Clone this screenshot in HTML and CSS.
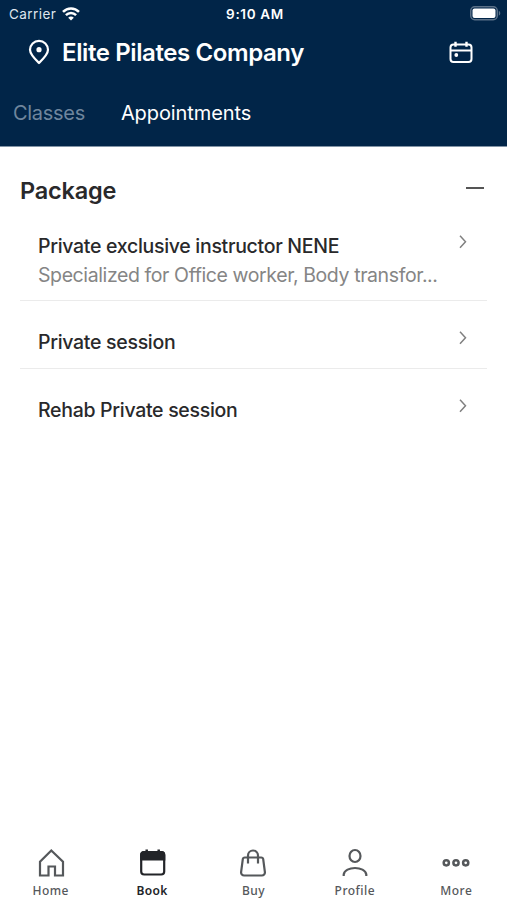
FILE: index.html
```html
<!DOCTYPE html>
<html lang="en">
<head>
    <meta charset="UTF-8">
    <meta name="viewport" content="width=device-width, initial-scale=1.0">
    <title>Elite Pilates Company</title>
    <link rel="stylesheet" href="styles.css">
</head>
<body>
    <div class="app">
        <header class="header">
            <div class="status-bar">
                <div class="carrier">
                    <span class="carrier-name">Carrier</span>
                    <svg width="18" height="14" viewBox="0 0 18 14" fill="none" stroke="#fff" stroke-width="2.5">
                        <path d="M1 4.9C5.5.2 12.500.2 17 4.900"/>
                        <path d="M3.900 8.200c2.900-2.900 7.300-2.900 10.200 0"/>
                        <path d="M9 13.500 6.200 10.700c1.600-1.500 4-1.500 5.600 0z" fill="#fff" stroke="none"/>
                    </svg>
                </div>
                <span class="clock">9:10 AM</span>
                <svg class="battery" width="31" height="15" viewBox="0 0 31 15">
                    <rect x=".75" y=".75" width="26.500" height="13" rx="4" fill="none" stroke="#5b7188" stroke-width="1.500"/>
                    <rect x="2.500" y="2.500" width="23" height="9.500" rx="2" fill="#fff"/>
                    <path d="M28.800 4.800c2 1 2 4 0 5z" fill="#5b7188"/>
                </svg>
            </div>

            <div class="title-bar">
                <svg width="22" height="26" viewBox="0 0 22 26" fill="none" stroke="#fff" stroke-width="2.200">
                    <path d="M11 24C7 20.200 2 15.500 2 10.800a9 9 0 0 1 18 0C20 15.500 15 20.200 11 24z" stroke-linejoin="round"/>
                    <circle cx="11" cy="10.700" r="2.600" fill="#fff" stroke="none"/>
                </svg>
                <h1>Elite Pilates Company</h1>
                <svg class="calendar" width="24" height="22" viewBox="0 0 24 22" fill="none" stroke="#fff" stroke-width="2">
                    <rect x="1.500" y="3.500" width="21" height="17.500" rx="3"/>
                    <path d="M2 9.500h20"/>
                    <path d="M6.500.8v5M17.500.8v5" stroke-width="2.400"/>
                    <circle cx="7.300" cy="14" r="1.900" fill="#fff" stroke="none"/>
                </svg>
            </div>

            <nav class="tabs">
                <span class="tab">Classes</span>
                <span class="tab active">Appointments</span>
            </nav>
        </header>

        <main class="content">
            <div class="section-header">
                <h2>Package</h2>
                <span class="collapse"></span>
            </div>

            <ul class="package-list">
                <li class="package first">
                    <div class="package-text">
                        <h3>Private exclusive instructor NENE</h3>
                        <p>Specialized for Office worker, Body transfor...</p>
                    </div>
                    <svg class="chevron" width="8" height="14" viewBox="0 0 8 14" fill="none" stroke="#808080" stroke-width="1.500"><path d="M1 .8l5.500 6L1 12.800"/></svg>
                </li>
                <li class="package">
                    <div class="package-text">
                        <h3>Private session</h3>
                    </div>
                    <svg class="chevron" width="8" height="14" viewBox="0 0 8 14" fill="none" stroke="#808080" stroke-width="1.500"><path d="M1 .8l5.500 6L1 12.800"/></svg>
                </li>
                <li class="package">
                    <div class="package-text">
                        <h3>Rehab Private session</h3>
                    </div>
                    <svg class="chevron" width="8" height="14" viewBox="0 0 8 14" fill="none" stroke="#808080" stroke-width="1.500"><path d="M1 .8l5.500 6L1 12.800"/></svg>
                </li>
            </ul>
        </main>

        <nav class="bottom-nav">
            <div class="nav-item">
                <svg width="28" height="30" viewBox="0 0 28 30" fill="none" stroke="#55585b" stroke-width="2.200">
                    <path d="M3 27.500V13.700L14.300 2.500 26 13.700V27.500H18V18.500H11.500V27.500z"/>
                </svg>
                <span>Home</span>
            </div>
            <div class="nav-item active">
                <svg width="28" height="30" viewBox="0 0 28 30" fill="none" stroke="#222428" stroke-width="2.200">
                    <rect x="3.200" y="4" width="23" height="22.500" rx="3"/>
                    <path d="M3.200 11.500V7a3 3 0 0 1 3-3h17a3 3 0 0 1 3 3v4.500z" fill="#222428"/>
                    <path d="M8.700 1.500v4M20.700 1.500v4" stroke-width="2.500"/>
                </svg>
                <span>Book</span>
            </div>
            <div class="nav-item">
                <svg width="28" height="30" viewBox="0 0 28 30" fill="none" stroke="#55585b" stroke-width="2.200">
                    <path d="M5.800 9.500h16.400a2 2 0 0 1 2 1.700l1.700 13a3 3 0 0 1-3 3.300H5.100a3 3 0 0 1-3-3.300l1.700-13a2 2 0 0 1 2-1.700z"/>
                    <path d="M9 15.500V7.500a5 5 0 0 1 10 0v8"/>
                </svg>
                <span>Buy</span>
            </div>
            <div class="nav-item">
                <svg width="28" height="30" viewBox="0 0 28 30" fill="none" stroke="#55585b" stroke-width="2.200">
                    <ellipse cx="14" cy="8" rx="5.500" ry="6"/>
                    <path d="M2.700 28v-1.500c1-8.700 21.600-8.700 22.600 0V28"/>
                </svg>
                <span>Profile</span>
            </div>
            <div class="nav-item">
                <svg width="28" height="30" viewBox="0 0 28 30" fill="none" stroke="#55585b" stroke-width="2.500">
                    <circle cx="4.300" cy="14.800" r="2.600"/>
                    <circle cx="14" cy="14.800" r="2.600"/>
                    <circle cx="23.700" cy="14.800" r="2.600"/>
                </svg>
                <span>More</span>
            </div>
        </nav>
    </div>
</body>
</html>
```
FILE: styles.css
```css
:root {
  --header-color: #012548;
  --text-color: #29292b;
  --muted-color: #858585;
  --border-color: #ebebeb;
  --nav-color: #55585b;
}

* {
  box-sizing: border-box;
  margin: 0;
  padding: 0;
}

body {
  font-family: 'Inter', 'Liberation Sans', sans-serif;
  background-color: white;
  color: var(--text-color);
}

svg {
  display: block;
  flex-shrink: 0;
}

.app {
  display: flex;
  flex-direction: column;
  height: 900px;
}

.header {
  height: 147px;
  background-color: var(--header-color);
  border-bottom: 1px solid #8294a6;
  color: white;
}

.status-bar {
  display: grid;
  grid-template-columns: 1fr auto 1fr;
  align-items: center;
  height: 27px;
  padding: 0 6px 0 9px;
}

.carrier {
  display: flex;
  align-items: center;
  gap: 6px;
}

.carrier-name {
  font-size: 13.5px;
  letter-spacing: 0.45px;
  color: #dfe6ed;
}

.clock {
  font-size: 13.5px;
  font-weight: 600;
  letter-spacing: 0.65px;
}

.battery {
  justify-self: end;
}

.title-bar {
  display: flex;
  align-items: center;
  height: 50px;
  padding: 0 34px 0 28px;
}

h1 {
  margin-left: 12px;
  font-size: 24px;
  font-weight: 600;
  letter-spacing: -0.4px;
  white-space: nowrap;
}

.calendar {
  margin-left: auto;
}

.tabs {
  display: flex;
  gap: 36px;
  padding: 22px 13px 0;
}

.tab {
  font-size: 20px;
  line-height: 28px;
  letter-spacing: -0.3px;
  color: #6f869d;
}

.tab.active {
  letter-spacing: -0.1px;
  color: white;
}

.content {
  flex: 1;
  padding: 23px 20px 0;
}

.section-header {
  display: flex;
  justify-content: space-between;
  align-items: center;
  height: 40px;
  padding-right: 3px;
}

h2 {
  padding-top: 1px;
  font-size: 23.5px;
  font-weight: 600;
  letter-spacing: -0.2px;
}

.collapse {
  width: 18px;
  height: 2px;
  margin-bottom: 4px;
  background-color: #555;
}

.package-list {
  list-style: none;
}

.package {
  display: flex;
  justify-content: space-between;
  padding: 27px 20px 12px 18px;
  border-bottom: 1px solid var(--border-color);
}

.package.first {
  padding-top: 22px;
  padding-bottom: 10px;
}

.package:last-child {
  border-bottom: none;
}

h3 {
  font-size: 19.5px;
  font-weight: 500;
  line-height: 28px;
  letter-spacing: -0.3px;
  white-space: nowrap;
}

.package p {
  font-size: 19.5px;
  line-height: 30px;
  letter-spacing: -0.4px;
  color: var(--muted-color);
  white-space: nowrap;
}

.chevron {
  margin-top: 3px;
}

.bottom-nav {
  display: grid;
  grid-template-columns: repeat(5, 1fr);
  height: 52px;
}

.nav-item {
  display: flex;
  flex-direction: column;
  align-items: center;
  font-family: 'Noto Sans', sans-serif;
  font-size: 12px;
  font-weight: 500;
  line-height: 16px;
  letter-spacing: 0.5px;
  color: var(--nav-color);
}

.nav-item span {
  margin-top: 5px;
}

.nav-item.active {
  font-weight: 600;
  letter-spacing: 0.3px;
  color: #222428;
}
```
